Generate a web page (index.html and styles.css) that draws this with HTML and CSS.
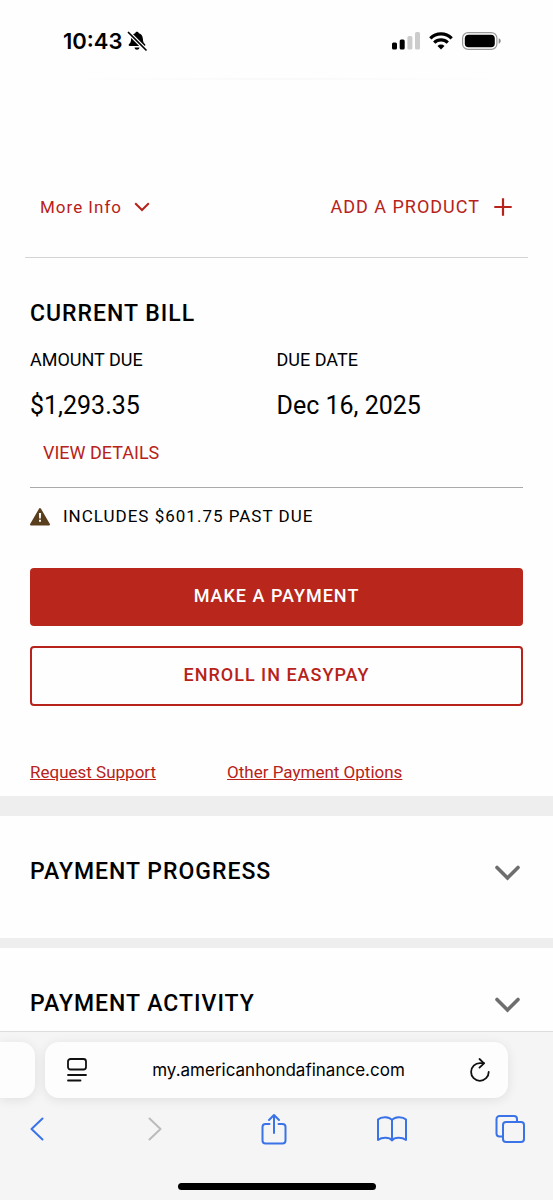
FILE: index.html
```html
<!DOCTYPE html>
<html lang="en">
<head>
    <meta charset="UTF-8">
    <meta name="viewport" content="width=device-width, initial-scale=1.0">
    <title>My Account</title>
    <link rel="stylesheet" href="styles.css">
</head>
<body>

    <div class="status-bar">
        <div class="clock">
            <span>10:43</span>
            <svg width="20" height="20" viewBox="0 0 20 20">
                <path d="M10 .8c.9 0 1.600.6 1.800 1.400 2.600.8 4 2.900 4.100 5.700.1 2.800.8 3.900 2 5.100.9 1 .5 1.900-.7 1.900H2.800c-1.200 0-1.600-.9-.7-1.900 1.200-1.200 1.900-2.300 2-5.100.1-2.800 1.500-4.900 4.100-5.700.2-.8.9-1.400 1.800-1.400zM7.500 16.600h5c-.3 1.400-1.200 2.200-2.500 2.200s-2.200-.8-2.500-2.200z"/>
                <path d="M1 1l18.500 18.500" stroke="#fff" stroke-width="4"/>
                <path d="M1.500 1.500l17.500 17.500" stroke="#000" stroke-width="1.700" stroke-linecap="round"/>
            </svg>
        </div>
        <div class="indicators">
            <svg width="28" height="18" viewBox="0 0 28 18">
                <rect x="0" y="10.500" width="5" height="7" rx="1.500"/>
                <rect x="7.700" y="7.500" width="5" height="10" rx="1.500"/>
                <rect x="15.400" y="4" width="5" height="13.500" rx="1.500" fill="#ccc"/>
                <rect x="23" y="0" width="5" height="17.500" rx="1.500" fill="#ccc"/>
            </svg>
            <svg width="24" height="18" viewBox="0 0 24 18" fill="none" stroke="#000" stroke-width="3.200">
                <path d="M1.300 6.300a15.200 15.200 0 0 1 21.400 0"/>
                <path d="M5.200 10.700a9.700 9.700 0 0 1 13.600 0"/>
                <path d="M12 17.500l-3.500-3.500a5 5 0 0 1 7 0z" fill="#000" stroke="none"/>
            </svg>
            <svg width="39" height="18" viewBox="0 0 39 18">
                <rect x=".6" y=".6" width="34.300" height="16.800" rx="5.500" fill="none" stroke="#999" stroke-width="1.200"/>
                <rect x="2.800" y="2.800" width="30" height="12.400" rx="3.800"/>
                <path d="M36.700 6.300c1.300.5 2 1.500 2 2.700s-.7 2.200-2 2.700z" fill="#888"/>
            </svg>
        </div>
    </div>

    <div class="content">
        <div class="account-actions">
            <button class="more-info">
                More Info
                <svg width="16" height="10" viewBox="0 0 16 10" fill="none" stroke="currentColor" stroke-width="2">
                    <path d="M1.200 1.200L8 8l6.800-6.800"/>
                </svg>
            </button>
            <a class="add-product" href="#">
                ADD A PRODUCT
                <svg width="18" height="18" viewBox="0 0 18 18" fill="none" stroke="currentColor" stroke-width="2.200">
                    <path d="M9 .3v17.400M.3 9h17.400"/>
                </svg>
            </a>
        </div>

        <div class="bill" id="current-bill">
            <h2>CURRENT BILL</h2>
            <dl class="amounts">
                <div>
                    <dt>AMOUNT DUE</dt>
                    <dd>$1,293.35</dd>
                </div>
                <div>
                    <dt>DUE DATE</dt>
                    <dd>Dec 16, 2025</dd>
                </div>
            </dl>
            <a class="view-details" href="#">VIEW DETAILS</a>
            <div class="past-due">
                <svg width="20" height="20" viewBox="0 0 20 20">
                    <path d="M10 3L19 18.500H1z" fill="#5a3f1e" stroke="#5a3f1e" stroke-width="2" stroke-linejoin="round"/>
                    <path d="M8.900 7h2.200l-.3 5.500H9.200zM9 13.800h2v2H9z" fill="#fff"/>
                </svg>
                <span>INCLUDES $601.75 PAST DUE</span>
            </div>
            <button class="btn btn-primary">MAKE A PAYMENT</button>
            <button class="btn btn-outline">ENROLL IN EASYPAY</button>
            <div class="links">
                <a href="#">Request Support</a>
                <a href="#">Other Payment Options</a>
            </div>
        </div>

        <div class="panel panel-first">
            <button class="panel-toggle">
                PAYMENT PROGRESS
                <svg width="28" height="18" viewBox="0 0 28 18" fill="none" stroke="#6e6e6e" stroke-width="3.600" stroke-linecap="round">
                    <path d="M2 4.500L12.500 15 23 4.500"/>
                </svg>
            </button>
        </div>

        <div class="panel">
            <button class="panel-toggle">
                PAYMENT ACTIVITY
                <svg width="28" height="18" viewBox="0 0 28 18" fill="none" stroke="#6e6e6e" stroke-width="3.600" stroke-linecap="round">
                    <path d="M2 4.500L12.500 15 23 4.500"/>
                </svg>
            </button>
        </div>
    </div>

    <div class="browser-bar">
        <div class="tabs">
            <div class="tab-previous"></div>
            <div class="address">
                <button aria-label="Page menu">
                    <svg width="20" height="24" viewBox="0 0 20 24" fill="none" stroke="#111" stroke-width="1.800" stroke-linecap="round">
                        <rect x="1" y="1" width="18" height="10.500" rx="2.500"/>
                        <path d="M1 17h18M1 22.500h12.500"/>
                    </svg>
                </button>
                <span>my.americanhondafinance.com</span>
                <button aria-label="Reload">
                    <svg width="20" height="24" viewBox="0 0 20 24" fill="none" stroke="#111" stroke-width="1.800" stroke-linecap="round" stroke-linejoin="round">
                        <path d="M18.700 14A8.800 8.800 0 1 1 10 5.200h4"/>
                        <path d="M9.500 1l4.500 4.300-4.500 4.300"/>
                    </svg>
                </button>
            </div>
        </div>
        <div class="toolbar">
            <button aria-label="Back">
                <svg width="14" height="24" viewBox="0 0 14 24"><path d="M12.500 1.500L1.500 12l11 10.500"/></svg>
            </button>
            <button class="inactive" aria-label="Forward">
                <svg width="14" height="24" viewBox="0 0 14 24"><path d="M1.500 1.500L12.500 12l-11 10.500"/></svg>
            </button>
            <button aria-label="Share">
                <svg width="26" height="32" viewBox="0 0 26 32"><path d="M8.500 11H4.500A3 3 0 0 0 1.500 14V27.500a3 3 0 0 0 3 3h17a3 3 0 0 0 3-3V14a3 3 0 0 0-3-3h-4M13 20V2M8 7l5-5 5 5"/></svg>
            </button>
            <button aria-label="Bookmarks">
                <svg width="30" height="26" viewBox="0 0 30 26"><path d="M15 4v20.500M15 4C12.500.500 4.500.200 1 3.500V24c4-3 11.500-3 14 .500 2.500-3.500 10-3.500 14-.500V3.500C25.500.200 17.500.500 15 4z"/></svg>
            </button>
            <button aria-label="Tabs">
                <svg width="30" height="28" viewBox="0 0 30 28"><path d="M7.500 21.500H4.500A3 3 0 0 1 1.500 18.500V4a3 3 0 0 1 3-3H19a3 3 0 0 1 3 3v3"/><rect x="8" y="7" width="21" height="20" rx="3"/></svg>
            </button>
        </div>
        <div class="home-indicator"></div>
    </div>

</body>
</html>
```

FILE: styles.css
```css
* {
    box-sizing: border-box;
}
body {
    font-family: Roboto, Arial, sans-serif;
    background-color: #fefefe;
    margin: 0;
    height: 100vh;
    display: flex;
    flex-direction: column;
    color: #000;
}
svg {
    display: block;
    flex: none;
}
button {
    font: inherit;
    color: inherit;
    letter-spacing: inherit;
    background: none;
    border: none;
    padding: 0;
    cursor: pointer;
}
a {
    color: #b7221a;
}
.status-bar {
    flex: none;
    height: 80px;
    padding: 2px 52px 0 63px;
    display: flex;
    justify-content: space-between;
    align-items: center;
    background: linear-gradient(90deg, #fefefe 10%, #f9f9f9 50%, #fefefe 95%) bottom / 100% 2px no-repeat;
}
.clock {
    display: flex;
    align-items: center;
    gap: 5px;
    font-family: Inter, sans-serif;
    font-size: 22px;
    font-weight: 600;
}
.indicators {
    display: flex;
    align-items: center;
    gap: 9px;
}
.content {
    flex: 1;
    min-height: 0;
    overflow: hidden;
}
.account-actions {
    display: flex;
    justify-content: space-between;
    align-items: center;
    margin: 0 25px;
    padding: 115px 16px 38px 15px;
    border-bottom: 1px solid #d4d4d4;
    font-size: 17px;
    line-height: 24px;
    letter-spacing: 1px;
    color: #b7221a;
}
.more-info,
.add-product {
    display: flex;
    align-items: center;
    gap: 12px;
    text-decoration: none;
}
.add-product {
    gap: 14px;
    font-size: 18px;
}
/* current bill */
.bill {
    padding: 42px 30px 12px;
}
h2,
.panel-toggle {
    margin: 0;
    font-size: 23px;
    line-height: 28px;
    font-weight: 500;
    letter-spacing: 1px;
}
.amounts {
    margin: 20px 0 19px;
    display: grid;
    grid-template-columns: 1fr 1fr;
}
.amounts dt {
    font-size: 18px;
    line-height: 24px;
}
.amounts dd {
    margin: 18px 0 0;
    font-size: 25px;
    line-height: 32px;
}
.view-details {
    display: block;
    padding: 0 13px;
    font-size: 18px;
    line-height: 24px;
    text-decoration: none;
}
.past-due {
    display: flex;
    align-items: center;
    gap: 13px;
    margin-top: 22px;
    padding: 16px 0 40px;
    border-top: 1px solid #aaa;
    font-size: 17px;
    line-height: 24px;
    letter-spacing: 1px;
}
.btn {
    display: block;
    width: 100%;
    height: 58px;
    padding-bottom: 3px;
    border-radius: 4px;
    font-size: 18px;
    font-weight: 500;
    letter-spacing: 1px;
}
.btn-primary {
    background-color: #b9261c;
    color: #fff;
}
.btn-outline {
    height: 60px;
    margin-top: 20px;
    border: 2px solid #b7221a;
    color: #b7221a;
}
.links {
    display: flex;
    gap: 71px;
    margin-top: 54px;
    font-size: 17px;
    line-height: 24px;
}
/* collapsed panels */
.panel {
    border-top: 10px solid #eee;
    padding: 42px 30px 52px;
}
.panel-first {
    border-top-width: 20px;
}
.panel-toggle {
    display: flex;
    justify-content: space-between;
    align-items: center;
    width: 100%;
}
/* browser */
.browser-bar {
    flex: none;
    border-top: 1px solid #ddd;
    background-color: #f5f5f5;
    padding: 10px 0;
}
.tabs {
    display: flex;
    gap: 10px;
    padding-right: 45px;
}
.tab-previous,
.address {
    height: 56px;
    background-color: #fdfdfd;
    box-shadow: 0 2px 12px rgba(0, 0, 0, 0.09);
}
.tab-previous {
    width: 35px;
    border-radius: 0 14px 14px 0;
}
.address {
    flex: 1;
    display: flex;
    align-items: center;
    justify-content: space-between;
    padding: 0 18px 0 22px;
    border-radius: 14px;
    font-family: Inter, sans-serif;
    font-size: 17px;
}
.toolbar {
    display: flex;
    justify-content: space-between;
    align-items: center;
    height: 62px;
    padding: 0 28px 0 22px;
    color: #3a73e8;
}
.toolbar button {
    width: 30px;
}
.toolbar svg {
    margin: 0 auto;
    fill: none;
    stroke: currentColor;
    stroke-width: 2;
    stroke-linecap: round;
    stroke-linejoin: round;
}
.toolbar .inactive {
    color: #bbb;
}
.home-indicator {
    width: 198px;
    height: 7px;
    margin: 23px auto 0;
    border-radius: 4px;
    background-color: #000;
}
```
